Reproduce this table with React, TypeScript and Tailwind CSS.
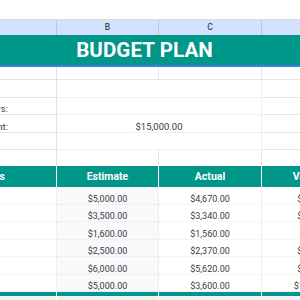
const teal = 'bg-[#00968a]'

const rows = [
  { estimate: '$5,000.00', actual: '$4,670.00', variance: '$330.00' },
  { estimate: '$3,500.00', actual: '$3,340.00', variance: '$160.00' },
  { estimate: '$1,600.00', actual: '$1,560.00', variance: '$40.00' },
  { estimate: '$2,500.00', actual: '$2,370.00', variance: '$130.00' },
  { estimate: '$6,000.00', actual: '$5,620.00', variance: '$380.00' },
  { estimate: '$5,000.00', actual: '$3,600.00', variance: '$1,400.00' },
]

const grid = 'grid grid-cols-[57px_102px_103px_103px]'

function LabelRow({ h, label, value }: { h: string; label?: string; value?: string }) {
  return (
    <div className={`${grid} ${h} text-[9.5px] leading-none text-[#3c4043]`}>
      <div className="flex items-end justify-end overflow-hidden whitespace-nowrap border-b border-r border-[#e2e2e2] pb-[0.5px] pr-[48px]">
        {label}
      </div>
      <div className="col-span-2 flex items-end justify-center border-b border-r border-dotted border-b-[#e4e4e4] border-r-[#e2e2e2] pb-[0.5px]">
        {value}
      </div>
      <div className="border-b border-[#e6e6e6]" />
    </div>
  )
}

export default function App() {
  return (
    <div className="h-[300px] w-[300px] overflow-hidden bg-white font-[Roboto,sans-serif]">
      <div className="h-[20px] border-b border-[#dadce0] bg-white" />

      <div className={`${grid} h-[15px] bg-[#d3e3fd] text-[8.5px] font-medium text-[#444746]`}>
        <div className="border-r border-[#c4c7c5]" />
        <div className="flex items-center justify-center border-r border-[#c4c7c5]">B</div>
        <div className="flex items-center justify-center border-r border-[#c4c7c5]">C</div>
        <div />
      </div>

      <div className={`${teal} flex h-[30px] items-center justify-center pr-[11px]`}>
        <span className="text-[20.5px] font-bold tracking-[0.1px] text-white">BUDGET PLAN</span>
      </div>
      <div className="h-[2px] bg-[#3f7fe8]" />

      <div className={`${grid} h-[13px]`}>
        <div className="border-b border-r border-[#e2e2e2]" />
        <div className="border-b border-r border-[#e6e6e6]" />
        <div className="border-b border-r border-[#e6e6e6]" />
        <div className="border-b border-[#e6e6e6]" />
      </div>
      <LabelRow h="h-[18px]" />
      <LabelRow h="h-[17px]" label="Number of Earners:" />
      <LabelRow h="h-[18px]" label="Total Budget Amount:" value="$15,000.00" />
      <LabelRow h="h-[17px]" />
      <div className={`${grid} h-[16px]`}>
        <div className="border-r border-[#e2e2e2]" />
        <div className="border-r border-[#e6e6e6]" />
        <div className="border-r border-[#e6e6e6]" />
        <div />
      </div>

      <div className={`${grid} ${teal} h-[21px] text-[10.5px] font-bold text-white`}>
        <div className="flex items-center justify-end overflow-hidden whitespace-nowrap border-r border-white pr-[51px]">
          Categories
        </div>
        <div className="flex items-center justify-center border-r border-white">Estimate</div>
        <div className="flex items-center justify-center border-r border-white">Actual</div>
        <div className="flex items-center justify-center">Variance</div>
      </div>

      {rows.map((r, i) => (
        <div key={i} className={`${grid} h-[17.5px] text-[9px] leading-none text-[#3c4043]`}>
          <div className="border-b border-r border-dotted border-b-[#ececec] border-r-[#e2e2e2]" />
          <div className="flex items-end justify-center border-b border-r border-dotted border-b-[#e6e6e6] border-r-[#e2e2e2] bg-[#f8f9fa]">
            {r.estimate}
          </div>
          <div className="flex items-end justify-center border-b border-r border-dotted border-b-[#ececec] border-r-[#e2e2e2]">
            {r.actual}
          </div>
          <div className="flex items-end justify-center border-b border-dotted border-b-[#ececec]">
            {r.variance}
          </div>
        </div>
      ))}

      <div className={`${grid} ${teal} h-[4px]`}>
        <div className="border-r border-white" />
        <div className="border-r border-white" />
        <div className="border-r border-white" />
        <div />
      </div>
      <div className={`${grid} h-[10px] bg-[#f1f3f4]`}>
        <div className="border-r border-white" />
        <div className="border-r border-white" />
        <div className="border-r border-white" />
        <div />
      </div>
    </div>
  )
}
